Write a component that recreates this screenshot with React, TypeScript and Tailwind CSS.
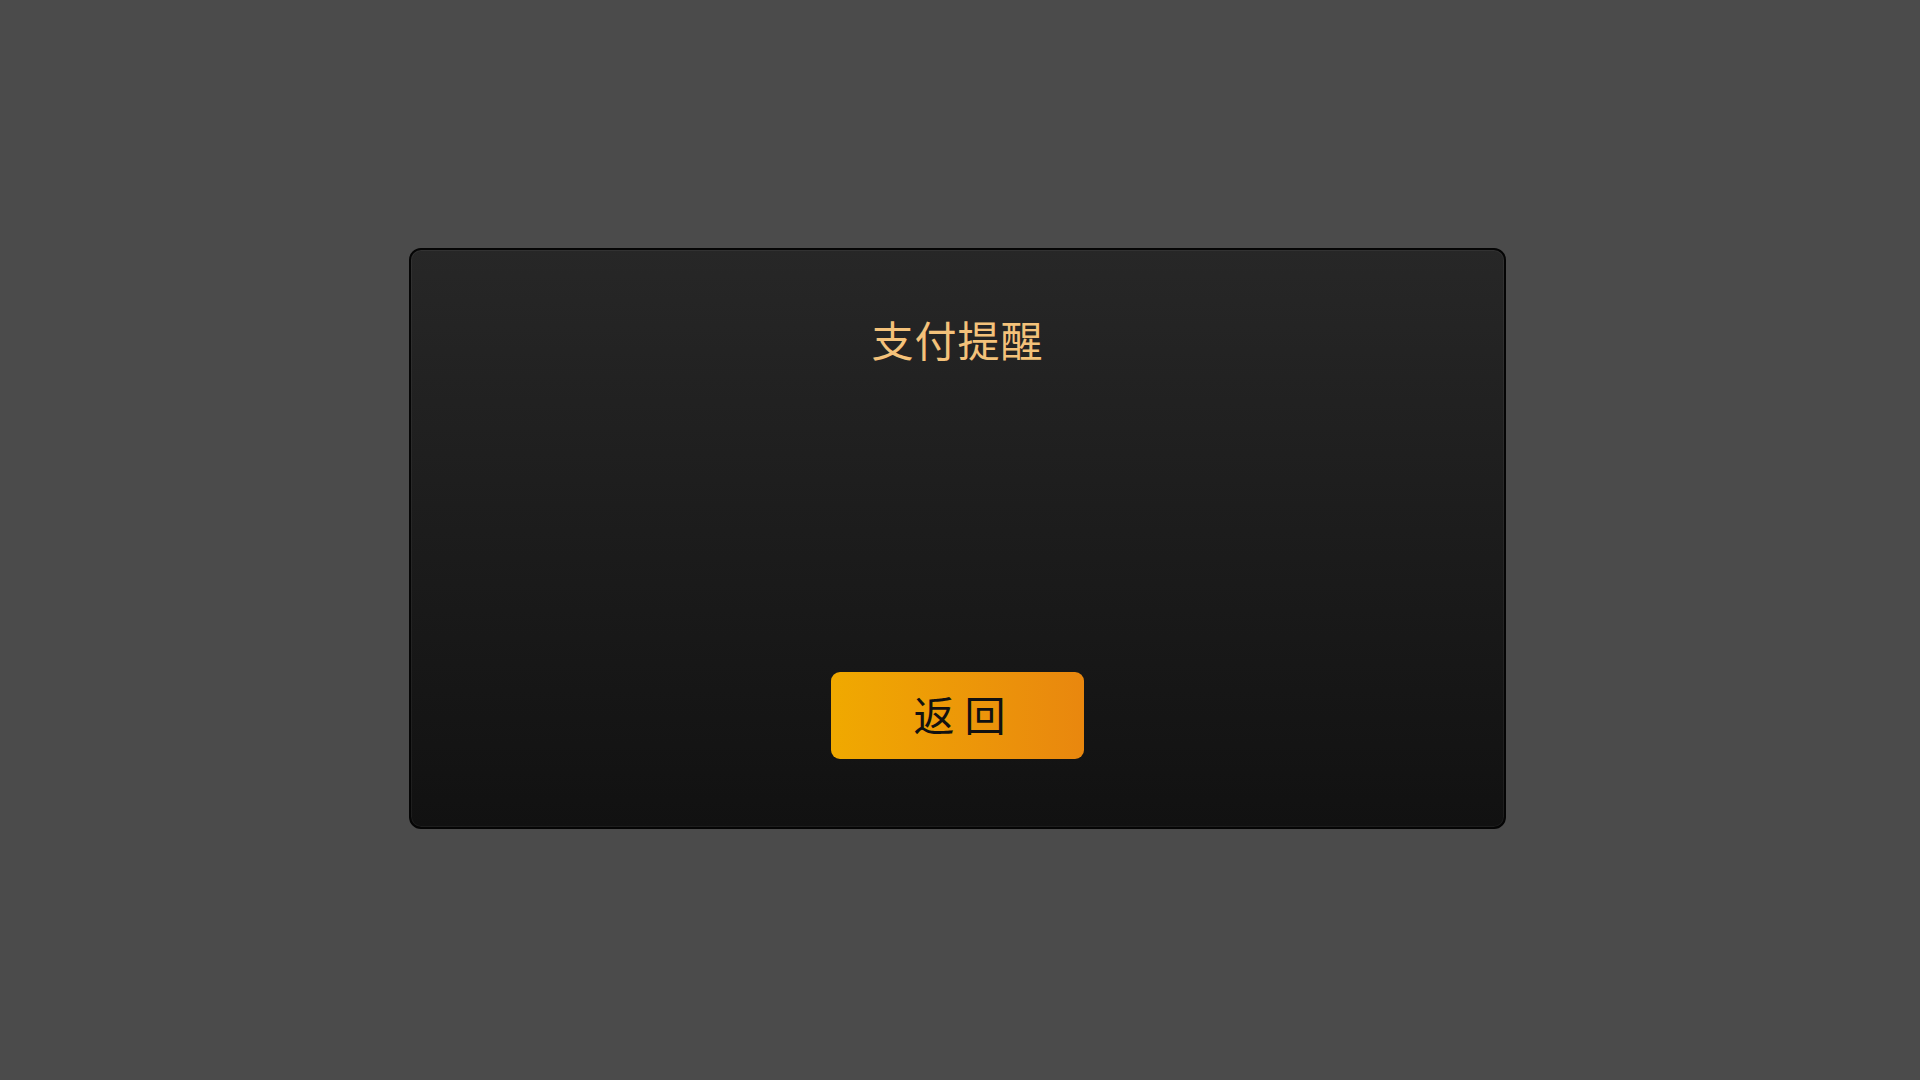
import React from "react";

export default function App() {
  return (
    <div
      className="w-[1920px] h-[1080px] bg-[#4b4b4b] flex items-center justify-center overflow-hidden"
      style={{ fontFamily: '"Noto Sans CJK SC", "Noto Sans", sans-serif' }}
    >
      <div className="w-[1097px] h-[581px] mr-[5px] mb-[3px] rounded-[12px] border-2 border-[#050505] bg-gradient-to-b from-[#272727] to-[#111111] flex flex-col items-center pt-[68px] shadow-[inset_0_0_0_1px_rgba(255,255,255,0.05)]">
        <div className="text-[42px] leading-none text-[#f4c27a] tracking-[1px]">支付提醒</div>
        <button className="mt-[312px] w-[253px] h-[87px] rounded-[9px] bg-gradient-to-r from-[#f0a900] to-[#e9870e] text-[41px] leading-none text-[#111111] flex items-center justify-center pb-[4px] pl-[4px]">
          <span>返</span>
          <span className="ml-[10px]">回</span>
        </button>
      </div>
    </div>
  );
}
